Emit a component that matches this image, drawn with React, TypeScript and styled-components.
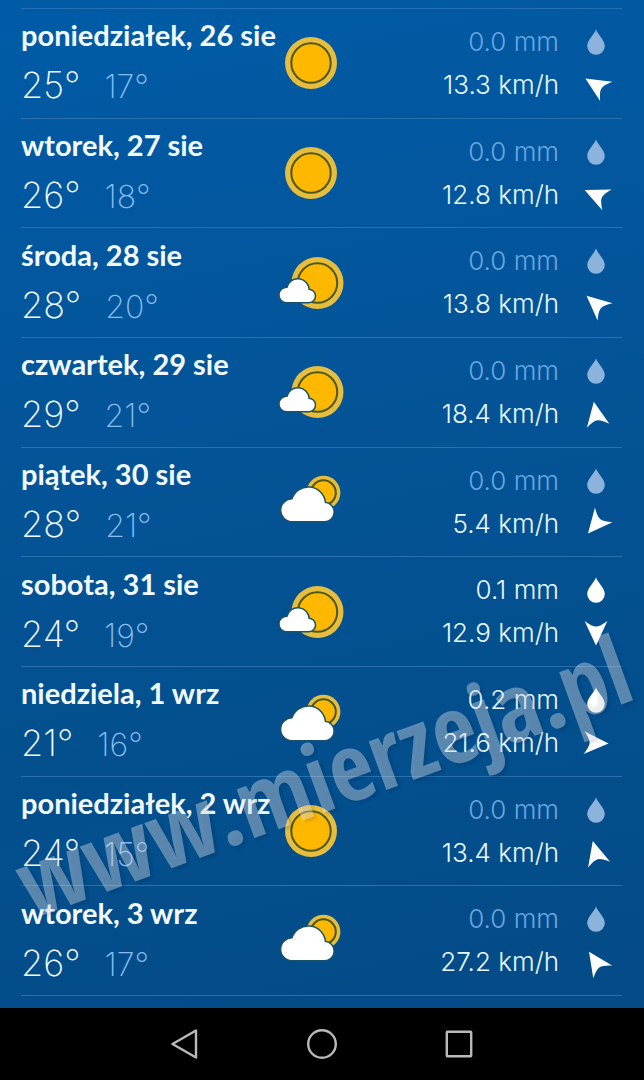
import React from "react";
import styled, { createGlobalStyle } from "styled-components";

const GlobalStyle = createGlobalStyle`
  *, *::before, *::after { box-sizing: border-box; }
  body {
    margin: 0;
    background: #000;
    font-family: Inter, "Open Sans", sans-serif;
    color: #f2faff;
  }
`;

const Screen = styled.div`
  min-height: 100vh;
  display: flex;
  flex-direction: column;
`;

const Forecast = styled.main`
  position: relative;
  flex: 1;
  display: flex;
  flex-direction: column;
  padding: 8px 22px 12px 21px;
  overflow: hidden;
  background: linear-gradient(168deg, #005ba6 0%, #03559a 35%, #03508f 65%, #044b87 100%);
`;

const DayList = styled.ul`
  flex: 1;
  display: flex;
  flex-direction: column;
  margin: 0;
  padding: 0;
  list-style: none;
  border-top: 1px solid #2470b2;
`;

const DayRow = styled.li`
  flex: 1;
  display: grid;
  grid-template-columns: minmax(0, 12fr) 68px minmax(0, 13fr);
  align-items: center;
  border-bottom: 1px solid #2a70ac;
`;

const Summary = styled.div`
  display: flex;
  flex-direction: column;
  gap: 14px;
  white-space: nowrap;
`;

const DayName = styled.h2`
  margin: 0;
  font-family: Lato, "Open Sans", sans-serif;
  font-size: 29px;
  font-weight: 700;
  line-height: 32px;
`;

const Temperatures = styled.div`
  display: flex;
  align-items: baseline;
  gap: 24px;
  line-height: 40px;
  font-weight: 200;
`;

const High = styled.span`
  font-size: 36px;
`;

const Low = styled.span`
  font-size: 32px;
  color: #86bdf2;
`;

const Details = styled.div`
  display: flex;
  flex-direction: column;
  gap: 11px;
  padding-right: 13px;
`;

const Detail = styled.div<{ $muted?: boolean }>`
  display: flex;
  align-items: center;
  justify-content: flex-end;
  gap: 24px;
  font-size: 26px;
  font-weight: 300;
  line-height: 32px;
  white-space: nowrap;
  color: ${(p) => (p.$muted ? "#69a6e0" : "#e8f8ff")};
`;

const Icon = styled.svg`
  display: block;
  flex: none;
`;

const Watermark = styled.div`
  position: absolute;
  left: 0;
  right: 0;
  bottom: 194px;
  display: flex;
  justify-content: center;
  pointer-events: none;
`;

const WatermarkText = styled.span`
  font-family: "Open Sans Condensed", "Noto Sans Condensed", "Roboto Condensed", "Open Sans", sans-serif;
  font-size: 95px;
  font-weight: 700;
  line-height: 80px;
  white-space: nowrap;
  color: rgba(255, 255, 255, 0.35);
  text-shadow: 2px 3px 3px rgba(0, 20, 50, 0.12);
  transform: rotate(-20deg);
`;

const NavBar = styled.nav`
  display: flex;
  justify-content: center;
  align-items: center;
  gap: 89px;
  height: 72px;
  background: #000;
`;

const NavButton = styled.button`
  display: grid;
  place-items: center;
  width: 48px;
  height: 48px;
  padding: 0;
  border: 0;
  background: none;
`;

type Sky = "sun" | "mostlySun" | "mostlyCloud";

function SunDisc({ x, y, r, ring }: { x: number; y: number; r: number; ring: number }) {
  return (
    <g>
      <circle cx={x} cy={y} r={r} fill="#e6bd3c" />
      <circle cx={x} cy={y} r={ring} fill="#ffb800" stroke="#4c5716" strokeWidth="2" />
    </g>
  );
}

function SkyIcon({ sky }: { sky: Sky }) {
  return (
    <Icon width="68" height="60" viewBox="0 0 68 60" aria-hidden="true">
      {sky === "sun" && <SunDisc x={34} y={30} r={26} ring={19.7} />}
      {sky === "mostlySun" && (
        <>
          <SunDisc x={40.5} y={30} r={26} ring={19.7} />
          <path
            d="M9 49A7 7 0 1 1 10.5 35A10.6 10.6 0 0 1 31.5 37A6 6 0 0 1 32 49Z"
            fill="#fff"
            stroke="#17536f"
            strokeWidth="3"
            paintOrder="stroke"
          />
        </>
      )}
      {sky === "mostlyCloud" && (
        <>
          <SunDisc x={46.4} y={20.7} r={17} ring={12.4} />
          <path
            d="M14.7 49A10.7 10.7 0 1 1 15.5 27.6A16.5 16.5 0 0 1 47.8 31A9 9 0 0 1 47 49Z"
            fill="#fff"
            stroke="#17536f"
            strokeWidth="3"
            paintOrder="stroke"
          />
        </>
      )}
    </Icon>
  );
}

function DropIcon({ muted }: { muted: boolean }) {
  return (
    <Icon width="26" height="26" viewBox="0 0 26 26" aria-hidden="true">
      <path
        d="M13 0.3C14.2 5.2 21.8 11 21.8 17A8.8 8.8 0 0 1 4.2 17C4.2 11 11.8 5.2 13 0.3Z"
        fill={muted ? "#8bb3db" : "#fff"}
      />
    </Icon>
  );
}

function WindIcon({ heading }: { heading: number }) {
  return (
    <Icon width="26" height="26" viewBox="0 0 26 26" overflow="visible" aria-hidden="true">
      <path
        d="M13 0.5L24.4 25Q17 19.4 13 19.4Q9 19.4 1.6 25Z"
        fill="#fff"
        transform={`rotate(${heading} 13 13)`}
      />
    </Icon>
  );
}

interface Day {
  name: string;
  high: number;
  low: number;
  sky: Sky;
  rain: string;
  wind: string;
  heading: number;
}

const days: Day[] = [
  { name: "poniedziałek, 26 sie", high: 25, low: 17, sky: "sun", rain: "0.0", wind: "13.3", heading: -58 },
  { name: "wtorek, 27 sie", high: 26, low: 18, sky: "sun", rain: "0.0", wind: "12.8", heading: -66 },
  { name: "środa, 28 sie", high: 28, low: 20, sky: "mostlySun", rain: "0.0", wind: "13.8", heading: -49 },
  { name: "czwartek, 29 sie", high: 29, low: 21, sky: "mostlySun", rain: "0.0", wind: "18.4", heading: -10 },
  { name: "piątek, 30 sie", high: 28, low: 21, sky: "mostlyCloud", rain: "0.0", wind: "5.4", heading: -140 },
  { name: "sobota, 31 sie", high: 24, low: 19, sky: "mostlySun", rain: "0.1", wind: "12.9", heading: 180 },
  { name: "niedziela, 1 wrz", high: 21, low: 16, sky: "mostlyCloud", rain: "0.2", wind: "21.6", heading: 92 },
  { name: "poniedziałek, 2 wrz", high: 24, low: 15, sky: "sun", rain: "0.0", wind: "13.4", heading: -15 },
  { name: "wtorek, 3 wrz", high: 26, low: 17, sky: "mostlyCloud", rain: "0.0", wind: "27.2", heading: -34 },
];

export default function App() {
  return (
    <Screen>
      <GlobalStyle />
      <Forecast>
        <DayList>
          {days.map((day) => {
            const dry = day.rain === "0.0";
            return (
              <DayRow key={day.name}>
                <Summary>
                  <DayName>{day.name}</DayName>
                  <Temperatures>
                    <High>{day.high}°</High>
                    <Low>{day.low}°</Low>
                  </Temperatures>
                </Summary>
                <SkyIcon sky={day.sky} />
                <Details>
                  <Detail $muted={dry}>
                    {day.rain} mm
                    <DropIcon muted={dry} />
                  </Detail>
                  <Detail>
                    {day.wind} km/h
                    <WindIcon heading={day.heading} />
                  </Detail>
                </Details>
              </DayRow>
            );
          })}
        </DayList>
        <Watermark>
          <WatermarkText>www.mierzeja.pl</WatermarkText>
        </Watermark>
      </Forecast>
      <NavBar>
        <NavButton aria-label="Wstecz">
          <Icon width="32" height="32" viewBox="0 0 32 32" fill="none" stroke="#b9b9b9" strokeWidth="2.4" strokeLinejoin="round">
            <path d="M27 2.5V29.5L3.5 16Z" />
          </Icon>
        </NavButton>
        <NavButton aria-label="Ekran główny">
          <Icon width="32" height="32" viewBox="0 0 32 32" fill="none" stroke="#b9b9b9" strokeWidth="2.4">
            <circle cx="16" cy="16" r="13.8" />
          </Icon>
        </NavButton>
        <NavButton aria-label="Ostatnie aplikacje">
          <Icon width="32" height="32" viewBox="0 0 32 32" fill="none" stroke="#b9b9b9" strokeWidth="2.4" strokeLinejoin="round">
            <rect x="3.8" y="3.8" width="24.4" height="24.4" rx="0.5" />
          </Icon>
        </NavButton>
      </NavBar>
    </Screen>
  );
}
